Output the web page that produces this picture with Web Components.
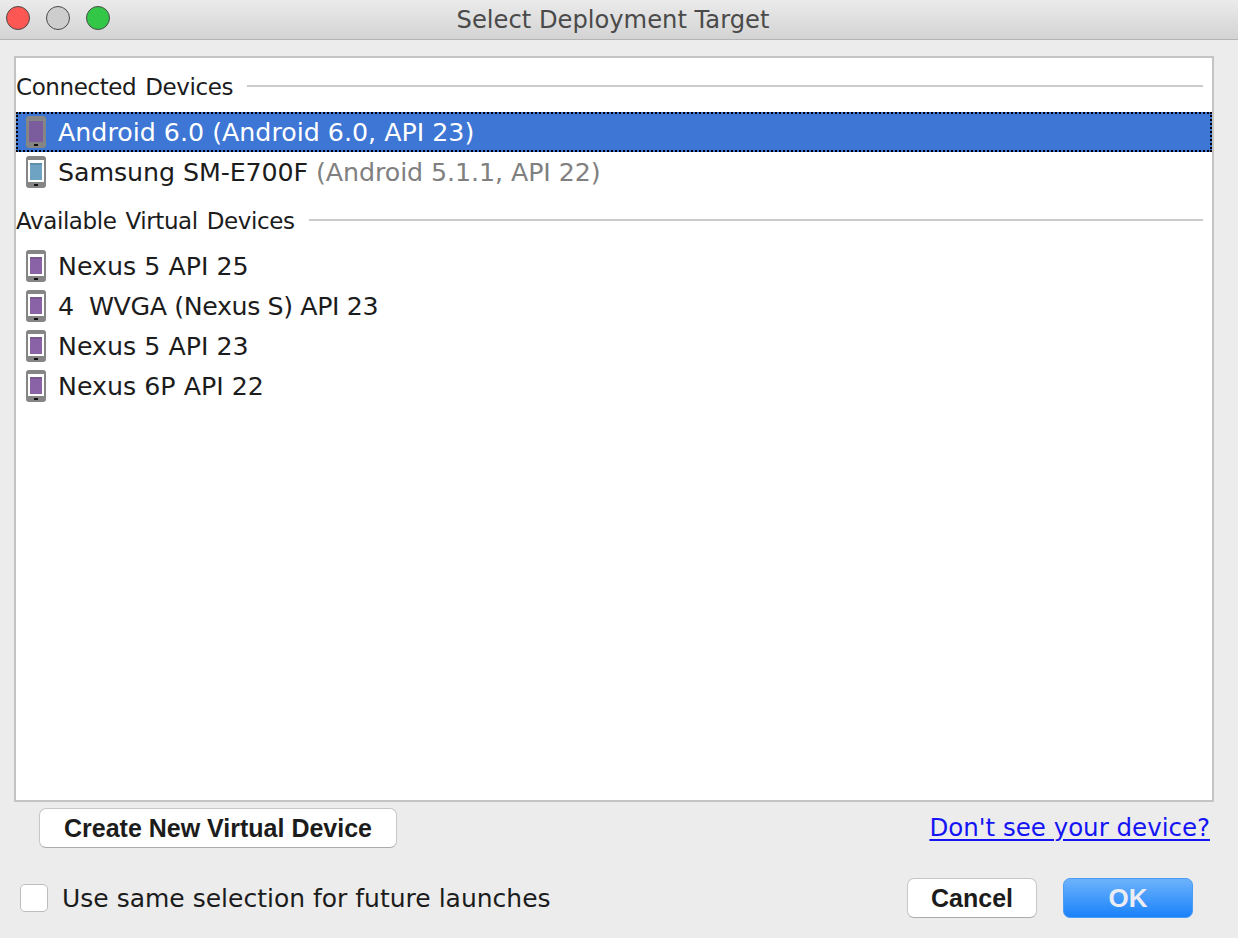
<!DOCTYPE html>
<html>
<head>
<meta charset="utf-8">
<title>Select Deployment Target</title>
<style>
  html, body { margin: 0; padding: 0; background: #ececec; }
</style>
</head>
<body>
<deploy-dialog>
  <section-header>Connected Devices</section-header>
  <device-row selected name="Android 6.0" detail="(Android 6.0, API 23)" color="#7b5d9e"></device-row>
  <device-row style="letter-spacing:-.08px" name="Samsung SM-E700F" detail="(Android 5.1.1, API 22)" color="#6ea3c4"></device-row>
  <section-header>Available Virtual Devices</section-header>
  <device-row name="Nexus 5 API 25" color="#8a63a6"></device-row>
  <device-row style="letter-spacing:-.4px" name="4&#160;&#160;WVGA (Nexus S) API 23" color="#8a63a6"></device-row>
  <device-row name="Nexus 5 API 23" color="#8a63a6"></device-row>
  <device-row name="Nexus 6P API 22" color="#8a63a6"></device-row>
</deploy-dialog>

<script>
class DeployDialog extends HTMLElement {
  constructor() {
    super();
    this.attachShadow({ mode: "open" });
  }

  connectedCallback() {
    this.shadowRoot.innerHTML = `
      <style>
        :host {
          display: flex;
          flex-direction: column;
          width: 1238px;
          height: 938px;
          overflow: hidden;
          background: #ececec;
          font-family: "DejaVu Sans", sans-serif;
          color: #1c1c1c;
        }
        .titlebar {
          position: relative;
          flex: none;
          height: 39px;
          padding-right: 12px;
          display: flex;
          align-items: center;
          justify-content: center;
          background: linear-gradient(#ebebeb, #d3d3d3);
          border-bottom: 1px solid #b4b4b4;
          font-size: 24.2px;
          color: #4a4a4a;
        }
        .lights {
          position: absolute;
          left: 6px;
          top: 6px;
          display: flex;
          gap: 16px;
        }
        .lights i {
          width: 22px;
          height: 22px;
          border-radius: 50%;
          border: 1px solid;
        }
        .red { background: #fc5753; border-color: #e8504c; }
        .grey { background: #cdcdcd; border-color: #c0c0c0; }
        .green { background: #33c748; border-color: #2cb83f; }
        .list {
          flex: none;
          height: 742px;
          margin: 16px 24px 0 14px;
          border: 2px solid #c4c4c4;
          background: #fff;
        }
        .links {
          flex: none;
          height: 76px;
          box-sizing: border-box;
          display: flex;
          align-items: flex-start;
          justify-content: space-between;
          padding: 6px 28px 0 39px;
        }
        .help {
          margin-top: 3px;
          font-size: 24.5px;
          line-height: 34px;
          color: #1414f5;
          text-decoration: underline;
          text-underline-offset: 3px;
          text-decoration-thickness: 2px;
        }
        .footer {
          flex: none;
          display: flex;
          align-items: center;
          padding: 0 45px 0 20px;
        }
        .check {
          display: flex;
          align-items: center;
          gap: 14px;
          flex: 1;
          font-size: 25px;
        }
        .box {
          width: 26px;
          height: 26px;
          background: #fff;
          border: 1px solid #bdbdbd;
          border-radius: 5px;
        }
        .actions { display: flex; gap: 26px; }
      </style>
      <div class="titlebar">
        <div class="lights"><i class="red"></i><i class="grey"></i><i class="green"></i></div>
        Select Deployment Target
      </div>
      <div class="list"><slot></slot></div>
      <div class="links">
        <mac-button style="width:358px">Create New Virtual Device</mac-button>
        <span class="help">Don't see your device?</span>
      </div>
      <div class="footer">
        <label class="check"><span class="box"></span>Use same selection for future launches</label>
        <div class="actions">
          <mac-button style="width:130px">Cancel</mac-button>
          <mac-button primary style="width:130px">OK</mac-button>
        </div>
      </div>
    `;
  }
}

class SectionHeader extends HTMLElement {
  constructor() {
    super();
    this.attachShadow({ mode: "open" });
  }

  connectedCallback() {
    this.shadowRoot.innerHTML = `
      <style>
        :host {
          display: flex;
          align-items: center;
          gap: 14px;
          box-sizing: border-box;
          height: 54px;
          padding: 2px 9px 0 0;
          font-size: 23px;
          letter-spacing: -.4px;
          word-spacing: 2px;
        }
        span { padding-top: 2px; }
        .rule { flex: 1; height: 2px; background: #cbcbcb; }
      </style>
      <span><slot></slot></span>
      <div class="rule"></div>
    `;
  }
}

class DeviceRow extends HTMLElement {
  constructor() {
    super();
    this.attachShadow({ mode: "open" });
  }

  connectedCallback() {
    const name = this.getAttribute("name");
    const detail = this.getAttribute("detail");
    const color = this.getAttribute("color");
    const selected = this.hasAttribute("selected");
    // selected row has no white margin around the screen
    const screen = selected
      ? `<rect x="3" y="5" width="14" height="21" fill="${color}"/>`
      : `<rect x="2" y="4" width="16" height="22" fill="#fff"/>
         <rect x="4" y="7" width="12" height="17" fill="${color}"/>
         <rect x="4" y="7" width="12" height="2" fill="#000" opacity=".12"/>`;
    this.shadowRoot.innerHTML = `
      <style>
        :host {
          display: flex;
          align-items: center;
          box-sizing: border-box;
          height: 40px;
          padding-left: 10px;
          gap: 12px;
          font-size: 25.3px;
          white-space: pre;
        }
        :host([selected]) {
          background: #3d76d4;
          color: #fff;
          outline: 2px dotted #000;
          outline-offset: -2px;
        }
        .detail { color: #808080; }
        :host([selected]) .detail { color: #fff; }
        svg { flex: none; display: block; }
      </style>
      <svg width="20" height="32" viewBox="0 0 20 32">
        <rect width="20" height="32" rx="3" fill="#858585"/>
        ${screen}
        <rect x="8" y="28" width="4" height="2" fill="#111"/>
      </svg>
      <span>${name}${detail ? ' <span class="detail">' + detail + "</span>" : ""}</span>
    `;
  }
}

class MacButton extends HTMLElement {
  constructor() {
    super();
    this.attachShadow({ mode: "open" });
  }

  connectedCallback() {
    this.shadowRoot.innerHTML = `
      <style>
        :host {
          display: flex;
          align-items: center;
          justify-content: center;
          box-sizing: border-box;
          height: 40px;
          background: #fff;
          border: 1px solid #c6c6c6;
          border-bottom-color: #ababab;
          border-radius: 7px;
          font-family: "Liberation Sans", Arial, sans-serif;
          font-weight: bold;
          font-size: 25px;
          color: #1c1c1c;
        }
        :host([primary]) {
          background: linear-gradient(#6db3fb, #1a82fb);
          border-color: #4a9cf6;
          color: #ececf4;
          font-size: 26px;
        }
      </style>
      <slot></slot>
    `;
  }
}

customElements.define("deploy-dialog", DeployDialog);
customElements.define("section-header", SectionHeader);
customElements.define("device-row", DeviceRow);
customElements.define("mac-button", MacButton);
</script>
</body>
</html>
